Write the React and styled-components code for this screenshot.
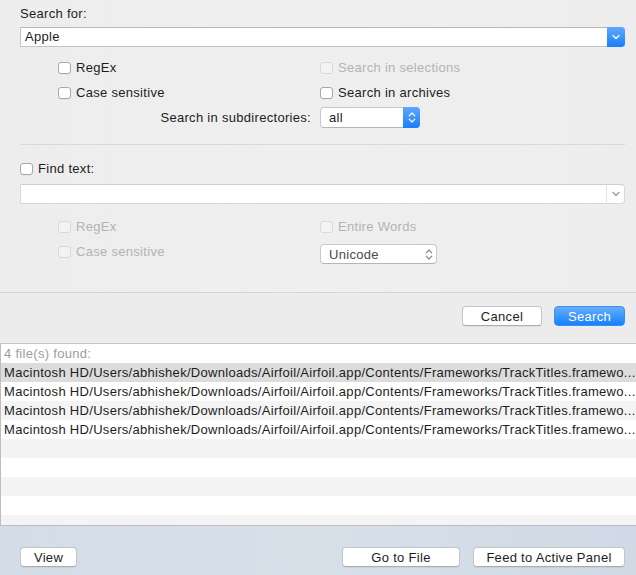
import React from "react";
import styled, { createGlobalStyle, css } from "styled-components";

const GlobalStyle = createGlobalStyle`
  html, body {
    margin: 0;
    padding: 0;
    background: #ececec;
  }
  body {
    font-family: "Liberation Sans", Arial, sans-serif;
    font-size: 13px;
    letter-spacing: 0.3px;
    color: #1d1d1d;
  }
`;

// Fenêtre principale
const Window = styled.div`
  width: 636px;
  height: 575px;
  display: flex;
  flex-direction: column;
  overflow: hidden;
`;

const Form = styled.div`
  height: 293px;
  flex: none;
  box-sizing: border-box;
  padding: 6px 11px 0 20px;
  border-bottom: 1px solid #d6d6d6;
  background: linear-gradient(90deg, #ededed, #efefef 50%, #ededed);
`;

const Label = styled.div`
  line-height: 16px;
  display: flex;
  align-items: center;
  gap: 5px;
`;

const Combo = styled.div`
  margin-top: ${(p) => p.$top || 0}px;
  height: 20px;
  box-sizing: border-box;
  display: flex;
  align-items: stretch;
  background: #fff;
  border: 1px solid ${(p) => (p.$disabled ? "#d8d8d8" : "#c4c4c4")};
  border-top-color: ${(p) => (p.$disabled ? "#cfcfcf" : "#b8b8b8")};
  border-radius: 0 4px 4px 0;
`;

const ComboText = styled.div`
  flex: 1;
  padding-left: 4px;
  line-height: 18px;
`;

const ComboButton = styled.div`
  width: 18px;
  margin: -1px -1px -1px 0;
  display: flex;
  align-items: center;
  justify-content: center;
  border-radius: 0 4px 4px 0;
  ${(p) =>
    p.$disabled
      ? css`
          margin: 0;
          width: 17px;
          border-left: 1px solid #e2e2e2;
        `
      : css`
          background: linear-gradient(#5fa8fb, #1a7ef9);
        `}
`;

// Grille des options
const Options = styled.div`
  margin-top: ${(p) => p.$top}px;
  display: grid;
  grid-template-columns: 300px 1fr;
  grid-auto-rows: 25px;
`;

const Cell = styled.div`
  display: flex;
  align-items: ${(p) => (p.$end ? "flex-end" : "center")};
  padding-left: ${(p) => (p.$indent ? 38 : 0)}px;
  justify-content: ${(p) => (p.$right ? "flex-end" : "flex-start")};
  padding-right: ${(p) => (p.$right ? 9 : 0)}px;
`;

const Check = styled.label`
  display: flex;
  align-items: center;
  gap: 5px;
  color: ${(p) => (p.$disabled ? "#b3b3b3" : "#1d1d1d")};
`;

const Box = styled.span`
  width: 13px;
  height: 12px;
  box-sizing: border-box;
  border: 1px solid ${(p) => (p.$disabled ? "#d9d9d9" : "#a9a9a9")};
  border-radius: 3px;
  background: ${(p) => (p.$disabled ? "#f3f3f3" : "#fff")};
  box-shadow: ${(p) => (p.$disabled ? "none" : "0 0.5px 0 rgba(0,0,0,0.08)")};
`;

const Popup = styled.div`
  width: ${(p) => p.$width}px;
  height: ${(p) => p.$height || 20}px;
  box-sizing: border-box;
  display: flex;
  background: #fff;
  border: 1px solid #c9c9c9;
  border-bottom-color: #b5b5b5;
  border-radius: 4px;
  color: ${(p) => (p.$disabled ? "#4a4a4a" : "#1d1d1d")};
`;

const PopupText = styled.div`
  flex: 1;
  padding-left: 8px;
  display: flex;
  align-items: center;
`;

const PopupArrows = styled.div`
  width: 17px;
  display: flex;
  align-items: center;
  justify-content: center;
  margin: -1px -1px -1px 0;
  border-radius: 0 4px 4px 0;
  background: ${(p) => (p.$blue ? "linear-gradient(#5fa8fb, #1a7ef9)" : "transparent")};
`;

const Separator = styled.div`
  margin-top: ${(p) => p.$top}px;
  height: 1px;
  background: #d8d8d8;
`;

// Barre d'actions
const Actions = styled.div`
  height: 51px;
  flex: none;
  box-sizing: border-box;
  display: flex;
  justify-content: flex-end;
  align-items: flex-start;
  gap: 12px;
  padding: 13px 11px 0 0;
  border-bottom: 1px solid #c6c6c6;
`;

const Button = styled.button`
  height: 20px;
  width: ${(p) => p.$width}px;
  padding: 0;
  font-family: inherit;
  font-size: 13px;
  letter-spacing: 0.3px;
  border-radius: 4px;
  ${(p) =>
    p.$primary
      ? css`
          color: #fff;
          border: 1px solid #3a8ef5;
          background: linear-gradient(#67aefb, #1581fb);
        `
      : css`
          color: #1d1d1d;
          background: #fff;
          border: 1px solid #c6c6c6;
          border-bottom-color: #adadad;
          box-shadow: 0 0.5px 1px rgba(0, 0, 0, 0.06);
        `}
`;

// Liste des résultats
const Results = styled.div`
  flex: 1;
  overflow: hidden;
  background: #fff;
  border-left: 1px solid #bdbdbd;
  border-bottom: 1px solid #bdbdbd;
`;

const Row = styled.div`
  height: 19px;
  line-height: 19px;
  padding-left: 3px;
  white-space: nowrap;
  overflow: hidden;
  background: ${(p) =>
    p.$selected ? "#dcdcdc" : p.$stripe ? "#f4f4f4" : "#fff"};
  color: ${(p) => (p.$muted ? "#9d9d9d" : "#1d1d1d")};
`;

const Footer = styled.div`
  height: 49px;
  flex: none;
  box-sizing: border-box;
  display: flex;
  align-items: flex-start;
  gap: 13px;
  padding: 21px 11px 0 20px;
  background: linear-gradient(90deg, #d3dde8, #d7e0e9 50%, #cfdae6);
`;

const Spacer = styled.div`
  flex: 1;
`;

const ChevronDown = ({ color = "#fff" }) => (
  <svg width="8" height="6" viewBox="0 0 8 6">
    <path d="M1 1.5 L4 4.5 L7 1.5" fill="none" stroke={color} strokeWidth="1.3" strokeLinecap="round" strokeLinejoin="round" />
  </svg>
);

const UpDown = ({ color = "#fff" }) => (
  <svg width="8" height="13" viewBox="0 0 8 13">
    <path d="M1.2 4.8 L4 2 L6.8 4.8 M1.2 8.2 L4 11 L6.8 8.2" fill="none" stroke={color} strokeWidth="1.2" strokeLinecap="round" strokeLinejoin="round" />
  </svg>
);

const Checkbox = ({ label, disabled }) => (
  <Check $disabled={disabled}>
    <Box $disabled={disabled} />
    {label}
  </Check>
);

const path =
  "Macintosh HD/Users/abhishek/Downloads/Airfoil/Airfoil.app/Contents/Frameworks/TrackTitles.framewo...";

const App = () => {
  const files = [path, path, path, path];
  const empty = [4, 5, 6, 7, 8];

  return (
    <>
      <GlobalStyle />
      <Window>
        <Form>
          <Label>Search for:</Label>
          <Combo $top={5}>
            <ComboText>Apple</ComboText>
            <ComboButton>
              <ChevronDown />
            </ComboButton>
          </Combo>

          <Options $top={8}>
            <Cell $indent>
              <Checkbox label="RegEx" />
            </Cell>
            <Cell>
              <Checkbox label="Search in selections" disabled />
            </Cell>
            <Cell $indent>
              <Checkbox label="Case sensitive" />
            </Cell>
            <Cell>
              <Checkbox label="Search in archives" />
            </Cell>
            <Cell $right>Search in subdirectories:</Cell>
            <Cell>
              <Popup $width={100} $height={21}>
                <PopupText>all</PopupText>
                <PopupArrows $blue>
                  <UpDown />
                </PopupArrows>
              </Popup>
            </Cell>
          </Options>

          <Separator $top={14} />

          <Options $top={11}>
            <Cell>
              <Checkbox label="Find text:" />
            </Cell>
          </Options>
          <Combo $top={3} $disabled>
            <ComboText />
            <ComboButton $disabled>
              <ChevronDown color="#9a9a9a" />
            </ComboButton>
          </Combo>

          <Options $top={10}>
            <Cell $indent>
              <Checkbox label="RegEx" disabled />
            </Cell>
            <Cell>
              <Checkbox label="Entire Words" disabled />
            </Cell>
            <Cell $indent>
              <Checkbox label="Case sensitive" disabled />
            </Cell>
            <Cell $end>
              <Popup $width={117} $disabled>
                <PopupText>Unicode</PopupText>
                <PopupArrows>
                  <UpDown color="#8a8a8a" />
                </PopupArrows>
              </Popup>
            </Cell>
          </Options>
        </Form>

        <Actions>
          <Button $width={80}>Cancel</Button>
          <Button $width={71} $primary>
            Search
          </Button>
        </Actions>

        <Results>
          <Row $muted>4 file(s) found:</Row>
          {files.map((f, i) => (
            <Row key={i} $selected={i === 0} $stripe={i % 2 === 0}>
              {f}
            </Row>
          ))}
          {empty.map((i) => (
            <Row key={i} $stripe={i % 2 === 0} />
          ))}
        </Results>

        <Footer>
          <Button $width={57}>View</Button>
          <Spacer />
          <Button $width={118}>Go to File</Button>
          <Button $width={152}>Feed to Active Panel</Button>
        </Footer>
      </Window>
    </>
  );
};

export default App;
